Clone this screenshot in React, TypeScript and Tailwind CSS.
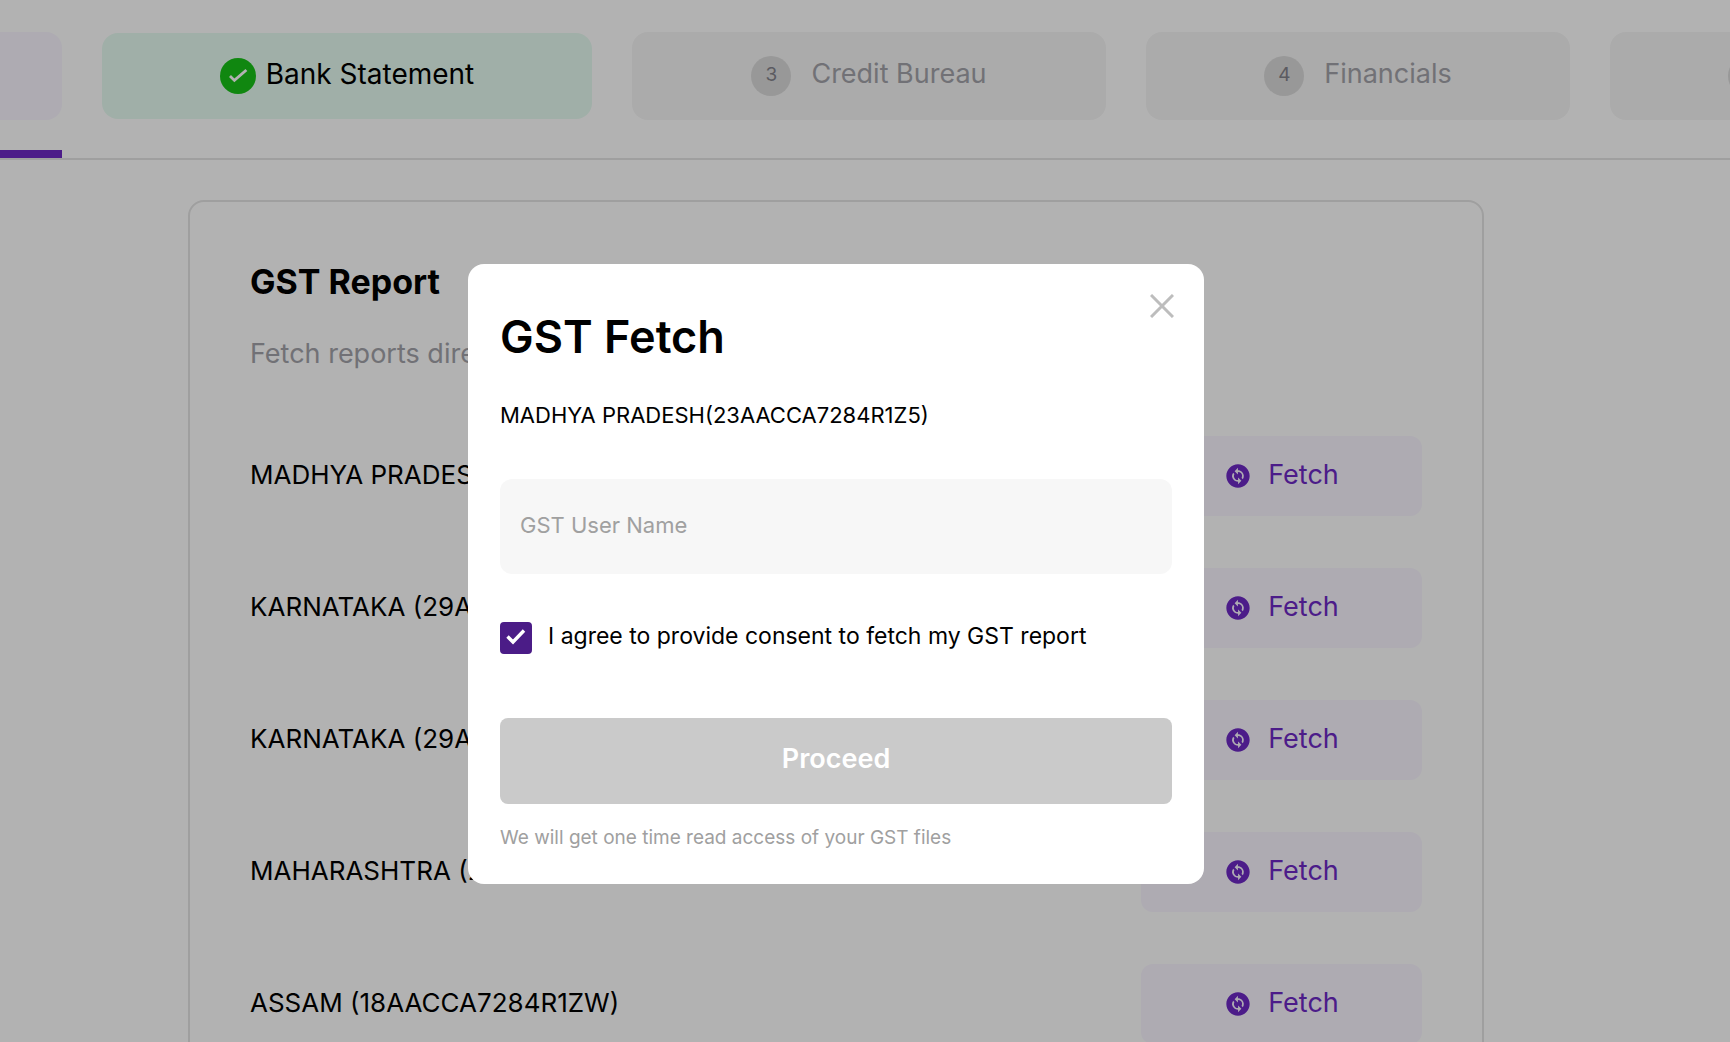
import { useState } from 'react'
import { MdChangeCircle } from 'react-icons/md'

const registrations = [
  { state: 'MADHYA PRADESH', gstin: '23AACCA7284R1Z5' },
  { state: 'KARNATAKA', gstin: '29AACCA7284R1ZT' },
  { state: 'KARNATAKA', gstin: '29AACCA7284R2ZS' },
  { state: 'MAHARASHTRA', gstin: '27AACCA7284R1ZX' },
  { state: 'ASSAM', gstin: '18AACCA7284R1ZW' },
]

function StepNumber({ value }: { value?: number }) {
  return (
    <span className="flex h-10 w-10 shrink-0 items-center justify-center rounded-full bg-[#dadada] pb-0.5 text-[19px] leading-7 text-[#83838b]">
      {value}
    </span>
  )
}

function Steps() {
  return (
    <nav className="flex items-start gap-10 overflow-hidden border-b-2 border-[#e4e4e4] pt-8">
      {/* Active step */}
      <div className="h-[126px] w-[62px] shrink-0 border-b-8 border-[#6d29c5]">
        <div className="h-[88px] rounded-r-2xl bg-[#f9f5ff]" />
      </div>

      {/* Completed step */}
      <div className="mt-px flex h-[86px] w-[490px] shrink-0 items-center justify-center gap-2.5 rounded-2xl bg-[#e6fbf1] text-[28px] text-black">
        <svg viewBox="0 0 36 36" className="h-9 w-9" aria-hidden="true">
          <circle cx="18" cy="18" r="18" fill="#17c217" />
          <path d="M10 18l4.4 4.4L26.4 12" fill="none" stroke="#fff" strokeWidth="2.8" />
        </svg>
        <span className="pb-1">Bank Statement</span>
      </div>

      {/* Pending steps */}
      <div className="flex h-[88px] w-[474px] shrink-0 items-center justify-center gap-5 rounded-2xl bg-[#f5f5f5] text-[27px] text-[#a3a3a9]">
        <StepNumber value={3} />
        <span className="pb-1">Credit Bureau</span>
      </div>
      <div className="flex h-[88px] w-[424px] shrink-0 items-center justify-center gap-5 rounded-2xl bg-[#f5f5f5] text-[27px] text-[#a3a3a9]">
        <StepNumber value={4} />
        <span className="pb-1">Financials</span>
      </div>
      <div className="flex h-[88px] w-[424px] shrink-0 items-center rounded-2xl bg-[#f5f5f5] pl-[118px]">
        <StepNumber />
      </div>
    </nav>
  )
}

function ReportCard() {
  return (
    <section className="mx-auto mt-10 w-full max-w-[1296px] rounded-2xl border-2 border-[#e4e4e4] px-[60px] pt-[58px] pb-16">
      <h1 className="text-[34px] leading-[44px] font-bold text-black">GST Report</h1>
      <p className="mt-8 text-[27px] leading-9 text-[#a3a3a9]">Fetch reports directly</p>
      <ul className="mt-16 flex flex-col gap-[52px]">
        {registrations.map(({ state, gstin }) => (
          <li key={gstin} className="flex items-center justify-between">
            <span className="pb-0.5 text-[26px] leading-9 text-black">
              {state} ({gstin})
            </span>
            <button
              type="button"
              className="flex h-20 w-[281px] items-center justify-center gap-4 rounded-xl bg-[#f9f5ff] text-[27px] text-[#6d29c5]"
            >
              <MdChangeCircle className="h-7 w-7" />
              <span className="pb-0.5">Fetch</span>
            </button>
          </li>
        ))}
      </ul>
    </section>
  )
}

function FetchDialog() {
  const [username, setUsername] = useState('')
  const [consent, setConsent] = useState(true)

  return (
    <div className="fixed inset-0 flex items-start justify-center bg-black/30 pt-[264px] pr-[58px]">
      <form
        role="dialog"
        aria-labelledby="dialog-title"
        className="relative w-full max-w-[736px] rounded-2xl bg-white px-8 pt-[43px] pb-8"
      >
        <button type="button" aria-label="Close" className="absolute top-[30px] right-[30px]">
          <svg viewBox="0 0 24 24" className="h-6 w-6" aria-hidden="true">
            <path d="M1 1l22 22M23 1L1 23" stroke="#bdbdbd" strokeWidth="3" />
          </svg>
        </button>

        <h2 id="dialog-title" className="text-[45px] leading-[60px] font-semibold text-black">
          GST Fetch
        </h2>
        <p className="mt-[34px] text-[22px] leading-7 text-black">MADHYA PRADESH(23AACCA7284R1Z5)</p>

        <input
          type="text"
          aria-label="GST User Name"
          placeholder="GST User Name"
          value={username}
          onChange={(e) => setUsername(e.target.value)}
          className="mt-[50px] block h-[95px] w-full rounded-xl bg-[#f7f7f7] px-5 pb-1 text-[22px] outline-none placeholder:text-[#a0a0a0]"
        />

        <label className="mt-12 flex items-center gap-4 text-[23px] leading-7 text-black">
          <span className="relative h-8 w-8 shrink-0">
            <input
              type="checkbox"
              checked={consent}
              onChange={(e) => setConsent(e.target.checked)}
              className="peer block h-8 w-8 appearance-none rounded border-2 border-[#4b1c87] checked:bg-[#4b1c87]"
            />
            <svg
              viewBox="0 0 32 32"
              className="pointer-events-none absolute inset-0 hidden h-8 w-8 peer-checked:block"
              aria-hidden="true"
            >
              <path d="M7.5 14.5l5.5 5.5L24 8.5" fill="none" stroke="#fff" strokeWidth="3.4" />
            </svg>
          </span>
          <span className="pb-1">I agree to provide consent to fetch my GST report</span>
        </label>

        <button
          type="submit"
          disabled={!username}
          className="mt-16 block h-[86px] w-full rounded-lg bg-[#cacaca] pb-1 text-[27px] font-semibold text-white"
        >
          Proceed
        </button>
        <p className="mt-5 text-[19px] leading-7 text-[#a0a0a0]">
          We will get one time read access of your GST files
        </p>
      </form>
    </div>
  )
}

export default function App() {
  return (
    <div className="h-screen overflow-hidden bg-white font-['Inter',sans-serif]">
      <Steps />
      <main className="pr-[58px]">
        <ReportCard />
      </main>
      <FetchDialog />
    </div>
  )
}
